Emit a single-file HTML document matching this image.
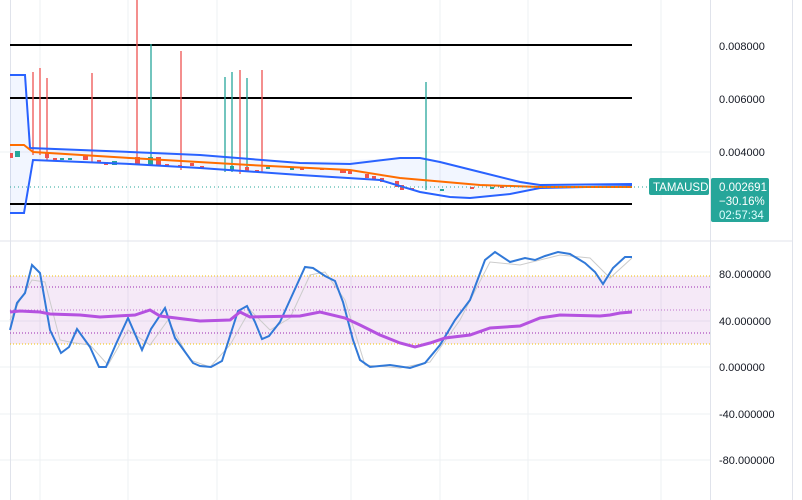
<!DOCTYPE html><html><head><style>body{margin:0;background:#fff;font-family:"Liberation Sans",sans-serif}svg{display:block}text{font-family:"Liberation Sans",sans-serif;font-size:11px;fill:#131722}</style></head><body>
<svg width="802" height="500" viewBox="0 0 802 500">
<g stroke="#eef0f3" stroke-width="1">
<line x1="40" y1="0" x2="40" y2="500"/><line x1="128" y1="0" x2="128" y2="500"/><line x1="217" y1="0" x2="217" y2="500"/><line x1="351" y1="0" x2="351" y2="500"/><line x1="440" y1="0" x2="440" y2="500"/><line x1="528" y1="0" x2="528" y2="500"/><line x1="661" y1="0" x2="661" y2="500"/>
<line x1="0" y1="152" x2="710" y2="152"/><line x1="0" y1="321" x2="710" y2="321"/><line x1="0" y1="367" x2="710" y2="367"/><line x1="0" y1="414" x2="710" y2="414"/><line x1="0" y1="460" x2="710" y2="460"/>
</g>
<line x1="0" y1="241" x2="792" y2="241" stroke="#e0e3eb"/>
<line x1="710.5" y1="0" x2="710.5" y2="500" stroke="#e0e3eb"/>
<line x1="792.5" y1="0" x2="792.5" y2="500" stroke="#e0e3eb"/>
<line x1="10.5" y1="0" x2="10.5" y2="500" stroke="#e0e3eb"/>
<polygon points="10,75 25,75 30,148 130,152 300,162 400,158 420,158 540,185 632,184 632,187 540,188 470,198 380,180 300,175 200,168 33,160 24,213 10,213" fill="#2962ff" fill-opacity="0.06"/>
<g stroke="#000" stroke-width="2"><line x1="10" y1="45" x2="632" y2="45"/><line x1="10" y1="98" x2="632" y2="98"/><line x1="10" y1="204" x2="632" y2="204"/></g>
<g stroke-width="1.3">
<line x1="33" y1="72" x2="33" y2="155" stroke="#ef5350"/><line x1="40" y1="68" x2="40" y2="155" stroke="#ef5350"/><line x1="47" y1="78" x2="47" y2="160" stroke="#ef5350"/><line x1="92" y1="73" x2="92" y2="162" stroke="#ef5350"/><line x1="137" y1="0" x2="137" y2="165" stroke="#ef5350"/><line x1="151" y1="44" x2="151" y2="165" stroke="#26a69a"/><line x1="181" y1="51" x2="181" y2="170" stroke="#ef5350"/><line x1="225" y1="77" x2="225" y2="172" stroke="#26a69a"/><line x1="232" y1="72" x2="232" y2="172" stroke="#26a69a"/><line x1="240" y1="70" x2="240" y2="174" stroke="#ef5350"/><line x1="247" y1="78" x2="247" y2="172" stroke="#26a69a"/><line x1="262" y1="70" x2="262" y2="172" stroke="#ef5350"/><line x1="426" y1="82" x2="426" y2="190" stroke="#26a69a"/>
</g>
<g fill="#ef5350"><rect x="10" y="153" width="3" height="5"/><rect x="45" y="152" width="4" height="6"/><rect x="53" y="158" width="4" height="2"/><rect x="83" y="155" width="5" height="5"/><rect x="97" y="160" width="4" height="3"/><rect x="104" y="162" width="4" height="3"/><rect x="135" y="157" width="5" height="7"/><rect x="156" y="157" width="5" height="8"/><rect x="165" y="164" width="4" height="2"/><rect x="178" y="165" width="4" height="2"/><rect x="190" y="163" width="4" height="3"/><rect x="200" y="166" width="4" height="2"/><rect x="245" y="167" width="4" height="4"/><rect x="255" y="170" width="4" height="2"/><rect x="300" y="168" width="4" height="2"/><rect x="320" y="168" width="4" height="2"/><rect x="340" y="169" width="6" height="4"/><rect x="348" y="171" width="4" height="3"/><rect x="365" y="174" width="4" height="4"/><rect x="372" y="176" width="4" height="3"/><rect x="380" y="178" width="4" height="4"/><rect x="395" y="181" width="4" height="6"/><rect x="400" y="185" width="4" height="5"/><rect x="410" y="188" width="4" height="2"/><rect x="470" y="187" width="4" height="2"/><rect x="500" y="186" width="4" height="2"/><rect x="560" y="186" width="4" height="2"/><rect x="600" y="186" width="4" height="2"/></g>
<g fill="#26a69a"><rect x="15" y="151" width="5" height="6"/><rect x="60" y="158" width="4" height="2"/><rect x="68" y="158" width="4" height="2"/><rect x="112" y="161" width="5" height="4"/><rect x="148" y="157" width="5" height="9"/><rect x="230" y="166" width="4" height="4"/><rect x="266" y="167" width="4" height="2"/><rect x="290" y="168" width="4" height="2"/><rect x="440" y="189" width="4" height="2"/><rect x="490" y="187" width="4" height="2"/><rect x="540" y="186" width="4" height="2"/><rect x="580" y="186" width="4" height="2"/></g>
<polyline points="10,75 25,75 30,148 130,152 200,155 300,163 350,164 400,158 420,158 440,162 480,172 520,182 540,185 632,184" fill="none" stroke="#2962ff" stroke-width="2"/>
<polyline points="10,213 24,213 33,160 130,164 200,168 300,175 380,180 420,192 450,197 470,198 510,194 540,188 632,186" fill="none" stroke="#2962ff" stroke-width="2"/>
<polyline points="10,145 24,145 33,152 130,158 250,165 350,170 400,178 480,185 540,187 632,187" fill="none" stroke="#ff6d00" stroke-width="2"/>
<line x1="10" y1="187" x2="650" y2="187" stroke="#26a69a" stroke-dasharray="1,3"/>
<rect x="10" y="276" width="700" height="68" fill="#9c27b0" fill-opacity="0.1"/>
<g stroke-dasharray="1,2"><line x1="10" y1="276" x2="710" y2="276" stroke="#f2c200"/><line x1="10" y1="344" x2="710" y2="344" stroke="#f2c200"/><line x1="10" y1="287" x2="710" y2="287" stroke="#9c27b0"/><line x1="10" y1="310" x2="710" y2="310" stroke="#9c27b0" stroke-opacity=".6"/><line x1="10" y1="333" x2="710" y2="333" stroke="#9c27b0"/></g>
<polyline points="10,320 20,300 32,280 45,282 60,340 75,343 90,345 108,365 128,330 150,345 168,320 190,360 210,367 230,345 250,310 270,330 290,318 310,275 325,272 345,300 365,365 400,368 430,362 460,320 490,262 520,265 560,255 590,258 610,278 632,258" fill="none" stroke="#ccc" stroke-width="1"/>
<polyline points="10,330 17,303 25,293 32,265 40,273 50,330 61,353 69,347 77,329 90,347 99,367 106,367 116,344 128,318 142,350 151,329 165,308 175,338 193,363 200,366 211,367 222,361 238,311 247,306 255,322 262,339 269,336 280,322 290,300 305,267 313,268 325,276 335,281 343,302 353,340 360,360 370,367 390,365 410,368 425,363 440,345 455,320 470,300 485,260 495,252 510,262 525,258 535,260 545,256 558,252 570,254 585,263 595,272 603,284 613,268 625,257 632,257" fill="none" stroke="#3179d8" stroke-width="2"/>
<polyline points="10,312 20,311 40,312 50,314 80,315 100,317 135,315 150,310 160,316 200,321 230,320 240,312 250,317 300,316 320,312 345,318 360,325 380,335 400,343 415,347 430,343 445,338 470,335 490,328 520,326 540,318 560,315 600,316 610,315 620,313 632,312" fill="none" stroke="#b552e0" stroke-width="3"/>
<text x="719" y="50">0.008000</text><text x="719" y="103">0.006000</text><text x="719" y="156">0.004000</text>
<text x="719" y="278">80.000000</text><text x="719" y="325">40.000000</text><text x="719" y="371">0.000000</text><text x="719" y="418">-40.000000</text><text x="719" y="464">-80.000000</text>
<rect x="649" y="178" width="60" height="17" rx="2" fill="#26a69a"/><text x="653" y="191" style="fill:#fff;font-size:11.5px">TAMAUSD</text>
<rect x="711" y="178" width="58" height="44" rx="2" fill="#26a69a"/>
<text x="719" y="191" style="fill:#fff;font-size:11.5px">0.002691</text><text x="719" y="205" style="fill:#fff;font-size:11.5px">−30.16%</text><text x="719" y="219" style="fill:#dff;font-size:11.5px">02:57:34</text>
</svg></body></html>
